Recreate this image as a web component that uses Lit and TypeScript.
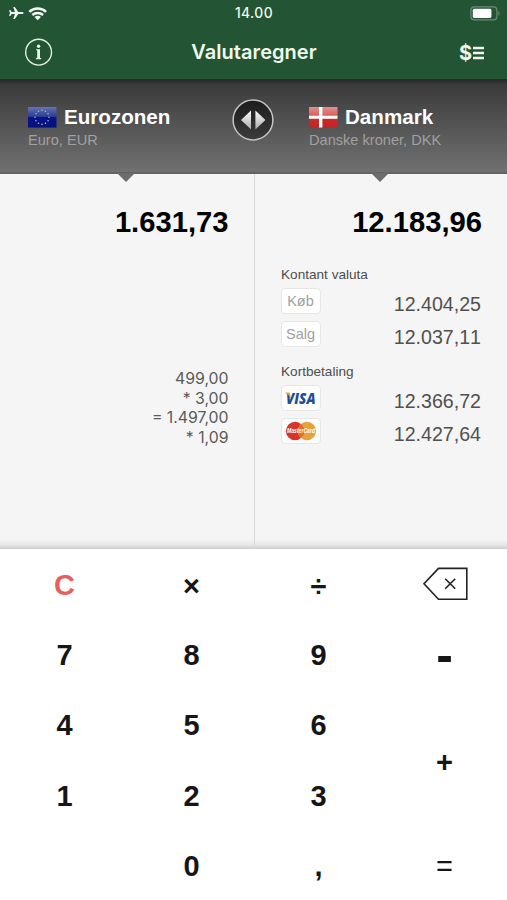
import { LitElement, html, svg, css } from "lit";
import { customElement, property } from "lit/decorators.js";

const helv = css`"Liberation Sans", Arial, sans-serif`;

const euStars = Array.from({ length: 12 }, (_, i) => {
  const a = (i * Math.PI) / 6;
  return svg`<circle cx=${14 + 7 * Math.sin(a)} cy=${10.3 - 7 * Math.cos(a)} r="0.8" fill="#b5b69c"/>`;
});

@customElement("status-bar")
class StatusBar extends LitElement {
  static styles = css`
    :host {
      display: grid;
      grid-template-columns: 1fr auto 1fr;
      align-items: center;
      height: 26px;
      padding: 0 7px 0 8px;
      color: #eef8ef;
      font: 500 13.8px/26px Inter, sans-serif;
    }
    .left { display: flex; align-items: center; gap: 4px; }
    .time { letter-spacing: 0.45px; }
    .battery { justify-self: end; display: flex; }
    svg { display: block; }
  `;
  render() {
    return html`
      <div class="left">
        <svg width="16" height="14" viewBox="0 0 16 14">
          <path fill="#f4fcf4" d="M15.6 7c0 .7-.8 1.1-1.8 1.1h-3.5L6.8 13H5.3l1.6-4.9H3.7L2.3 9.9H1.1L2 7 1.1 4.1h1.2l1.4 1.8h3.2L5.3 1h1.5l3.5 4.9h3.5c1 0 1.8.4 1.8 1.1z"/>
        </svg>
        <svg width="20" height="15" viewBox="0 0 20 15">
          <g fill="none" stroke="#f4fcf4" stroke-width="2.5">
            <path d="M1.3 5.9a12.4 12.4 0 0 1 16.8 0"/>
            <path d="M4.3 9a8 8 0 0 1 10.8 0"/>
          </g>
          <path fill="#f4fcf4" d="M9.7 14.3 6.5 11.1a4.6 4.6 0 0 1 6.4 0z"/>
        </svg>
      </div>
      <div class="time">14.00</div>
      <svg class="battery" width="30" height="15" viewBox="0 0 30 15">
        <rect x=".9" y=".9" width="26" height="13" rx="3.4" fill="none" stroke="#6a8d74" stroke-width="1.2"/>
        <rect x="2.8" y="2.8" width="18.6" height="9.2" rx="1.4" fill="#fff"/>
        <path d="M28.4 5.2c1.5.6 1.5 4 0 4.6z" fill="#6a8d74"/>
      </svg>
    `;
  }
}

@customElement("nav-bar")
class NavBar extends LitElement {
  static styles = css`
    :host {
      display: grid;
      grid-template-columns: 1fr auto 1fr;
      align-items: center;
      height: 53px;
      padding: 0 23px 0 24px;
      box-sizing: border-box;
      color: #eef9ee;
    }
    .title { font: 600 20px/53px Inter, sans-serif; letter-spacing: 0.05px; }
    .rates { justify-self: end; display: flex; align-items: center; gap: 1px; font: 700 20px/26px Inter, sans-serif; }
    svg { display: block; }
  `;
  render() {
    return html`
      <svg width="29" height="29" viewBox="0 0 29 29">
        <circle cx="14.6" cy="14.2" r="12.9" fill="none" stroke="#e0f2de" stroke-width="1.4"/>
        <circle cx="14.6" cy="8.2" r="1.7" fill="#e8f7e6"/>
        <path fill="#e8f7e6" d="M12 11.2h4v8.6l1.3.5v.9h-5.4v-.9l1.3-.5v-7.2l-1.2-.5z"/>
      </svg>
      <div class="title">Valutaregner</div>
      <div class="rates">
        <span>$</span>
        <svg width="11" height="14" viewBox="0 0 11 14">
          <path fill="none" stroke="#eef9ee" stroke-width="2.4" d="M0 2h11M0 7h11M0 12h11"/>
        </svg>
      </div>
    `;
  }
}

@customElement("currency-bar")
class CurrencyBar extends LitElement {
  static styles = css`
    :host {
      display: flex;
      height: 95px;
      box-sizing: border-box;
      position: relative;
      padding: 26px 0 0 28px;
      background: linear-gradient(#272727, #3b3b3b 6px, #404040 14px, #717171 93px);
      border-bottom: 2px solid #626262;
      font-family: ${helv};
    }
    .side { width: 204px; }
    .side + .swap + .side { width: auto; padding-left: 35px; }
    .name { display: flex; align-items: center; gap: 7px; height: 24px; color: #fff; font-weight: 700; font-size: 20.6px; line-height: 24px; }
    .unit { color: #a0a0a0; font-size: 14.6px; line-height: 20px; margin-top: 1px; white-space: nowrap; }
    .swap { width: 42px; height: 42px; margin-top: -6px; }
    svg { display: block; }
    .notch { position: absolute; top: 94px; width: 18px; height: 9px; background: #6c6c6c; clip-path: polygon(0 0, 100% 0, 50% 100%); }
    .from { left: 117px; }
    .to { left: 371px; }
  `;
  render() {
    return html`
      <div class="side">
        <div class="name">
          <svg width="29" height="21" viewBox="0 0 29 21">
            <defs>
              <linearGradient id="eu" x2="0" y2="1">
                <stop offset="0" stop-color="#6473b4"/><stop offset=".46" stop-color="#2b3d95"/>
                <stop offset=".5" stop-color="#08128a"/><stop offset="1" stop-color="#08107c"/>
              </linearGradient>
            </defs>
            <rect width="28.5" height="20.6" fill="url(#eu)"/>${euStars}
          </svg>
          <span>Eurozonen</span>
        </div>
        <div class="unit">Euro, EUR</div>
      </div>
      <svg class="swap" viewBox="0 0 42 42">
        <defs>
          <linearGradient id="arrow" x2="0" y2="1"><stop offset="0" stop-color="#fff"/><stop offset="1" stop-color="#aaa"/></linearGradient>
          <linearGradient id="disc" x2="0" y2="1"><stop offset="0" stop-color="#1c1c1c"/><stop offset="1" stop-color="#3c3c3c"/></linearGradient>
        </defs>
        <circle cx="21" cy="21" r="19.9" fill="url(#disc)" stroke="#c4c4c4" stroke-width="1.5"/>
        <path fill="url(#arrow)" d="M19 11.4v19L9 20.9zM23.4 11.4v19l10-9.5z"/>
      </svg>
      <div class="side">
        <div class="name">
          <svg width="29" height="21" viewBox="0 0 29 21">
            <defs>
              <linearGradient id="dk" x2="0" y2="1">
                <stop offset="0" stop-color="#e39090"/><stop offset=".46" stop-color="#d95858"/>
                <stop offset=".5" stop-color="#cb2a2a"/><stop offset="1" stop-color="#c42424"/>
              </linearGradient>
            </defs>
            <rect width="28.5" height="20.6" fill="url(#dk)"/>
            <path fill="#fff" d="M10 0h3.4v20.6H10zM0 8.8h28.5v3H0z"/>
          </svg>
          <span>Danmark</span>
        </div>
        <div class="unit">Danske kroner, DKK</div>
      </div>
      <div class="notch from"></div>
      <div class="notch to"></div>
    `;
  }
}

@customElement("rate-row")
class RateRow extends LitElement {
  @property() amount = "";
  static styles = css`
    :host { display: flex; justify-content: space-between; height: 33px; font: 19.6px/33px ${helv}; font-kerning: none; color: #505050; }
    .tag {
      display: flex; align-items: center; justify-content: center;
      width: 38px; height: 24px; background: #fff; border: 1px solid #e6e6e6; border-radius: 4px; margin-left: -0.5px;
      color: #a0a0a0; font-size: 14.5px; line-height: 24px;
    }
  `;
  render() {
    return html`<div class="tag"><slot></slot></div><div class="amount">${this.amount}</div>`;
  }
}

@customElement("results-panel")
class ResultsPanel extends LitElement {
  static styles = css`
    :host {
      display: grid;
      grid-template-columns: 254px 1fr;
      height: 375px;
      background: linear-gradient(transparent 365px, #e6e6e6 371px, #cdcdcd 375px), #f5f5f5;
      font-family: ${helv};
    }
    .col { box-sizing: border-box; padding: 28px 26px 0; }
    .col:first-child { padding-right: 25.5px; }
    .col + .col { border-left: 1px solid #d9d9d9; }
    .total { text-align: right; color: #000; font-weight: 700; font-size: 29.2px; line-height: 40px; }
    .history { margin-top: 127px; text-align: right; color: #5a5a5a; font: 400 15.8px/19.6px Inter, sans-serif; }
    .col + .col .total { margin-right: -1px; }
    .heading { color: #4e4e4e; font-size: 13.6px; line-height: 18px; }
    .cash { margin: 24px 0 4px; }
    .card { margin: 9px 0 4px; }
    .visa { font: italic 800 15px "Open Sans", sans-serif; fill: #1f4f98; }
    svg { display: block; overflow: visible; }
    .mc { font: italic 700 6.4px ${helv}; fill: #fff; }
  `;
  render() {
    return html`
      <div class="col">
        <div class="total">1.631,73</div>
        <div class="history">
          <div>499,00</div><div>* 3,00</div><div>= 1.497,00</div><div>* 1,09</div>
        </div>
      </div>
      <div class="col">
        <div class="total">12.183,96</div>
        <div class="heading cash">Kontant valuta</div>
        <rate-row amount="12.404,25">Køb</rate-row>
        <rate-row amount="12.037,11">Salg</rate-row>
        <div class="heading card">Kortbetaling</div>
        <rate-row amount="12.366,72">
          <svg width="36" height="24" viewBox="0 0 36 24">
            <text class="visa" x="3" y="17.6" textLength="29.5" lengthAdjust="spacingAndGlyphs">VISA</text>
            <path d="M2.4 6.6h4.2l1.3 5C6.6 9.4 4.6 7.9 2.4 7.2z" fill="#e3a83a"/>
          </svg>
        </rate-row>
        <rate-row amount="12.427,64">
          <svg width="36" height="24" viewBox="0 0 36 24">
            <circle cx="12.1" cy="12" r="9.2" fill="#d9332b"/>
            <circle cx="23.9" cy="12" r="9.2" fill="#e9a13b"/>
            <path d="M18 4.9a9.2 9.2 0 0 1 0 14.2 9.2 9.2 0 0 1 0-14.2z" fill="#e0702f"/>
            <text class="mc" x="4" y="14.3" textLength="28" lengthAdjust="spacingAndGlyphs">MasterCard</text>
          </svg>
        </rate-row>
      </div>
    `;
  }
}

@customElement("key-pad")
class KeyPad extends LitElement {
  static styles = css`
    :host {
      display: grid;
      grid-template-columns: 127px 127px 127px 1fr;
      grid-template-rows: repeat(5, 1fr);
      height: 351px;
      padding-left: 1px;
      box-sizing: border-box;
      background: #fff;
      color: #161616;
      font: 700 29px/34px ${helv};
    }
    .key { display: flex; align-items: center; justify-content: center; padding-top: 2px; }
    .key.clear { color: #e66060; padding-top: 1px; }
    .key.op { padding-top: 4px; }
    .plus { grid-row: 3 / span 2; grid-column: 4; }
    .minus { font-size: 50px; }
    .equals { font-weight: 400; }
    .key.back { padding-top: 0; }
    svg { display: block; }
  `;
  render() {
    return html`
      <div class="key clear">C</div>
      <div class="key op">×</div>
      <div class="key op">÷</div>
      <div class="key back">
        <svg width="46" height="34" viewBox="0 0 46 34">
          <path d="M16.5 1.4h28.3v30.8h-28.3L2 16.8zM23.2 11.8l10 10M33.2 11.8l-10 10" fill="none" stroke="#222" stroke-width="1.6"/>
        </svg>
      </div>
      <div class="key">7</div><div class="key">8</div><div class="key">9</div>
      <div class="key minus">-</div>
      <div class="key">4</div><div class="key">5</div><div class="key">6</div>
      <div class="key op plus">+</div>
      <div class="key">1</div><div class="key">2</div><div class="key">3</div>
      <div class="key"></div><div class="key">0</div><div class="key">,</div>
      <div class="key equals">=</div>
    `;
  }
}

@customElement("app-root")
class AppRoot extends LitElement {
  static styles = css`
    :host { display: flex; flex-direction: column; width: 507px; height: 900px; overflow: hidden; background: #fff; }
    .top { background: #235434; height: 79px; }
    currency-bar { z-index: 1; }
  `;
  render() {
    return html`
      <div class="top"><status-bar></status-bar><nav-bar></nav-bar></div>
      <currency-bar></currency-bar>
      <results-panel></results-panel>
      <key-pad></key-pad>
    `;
  }
}
